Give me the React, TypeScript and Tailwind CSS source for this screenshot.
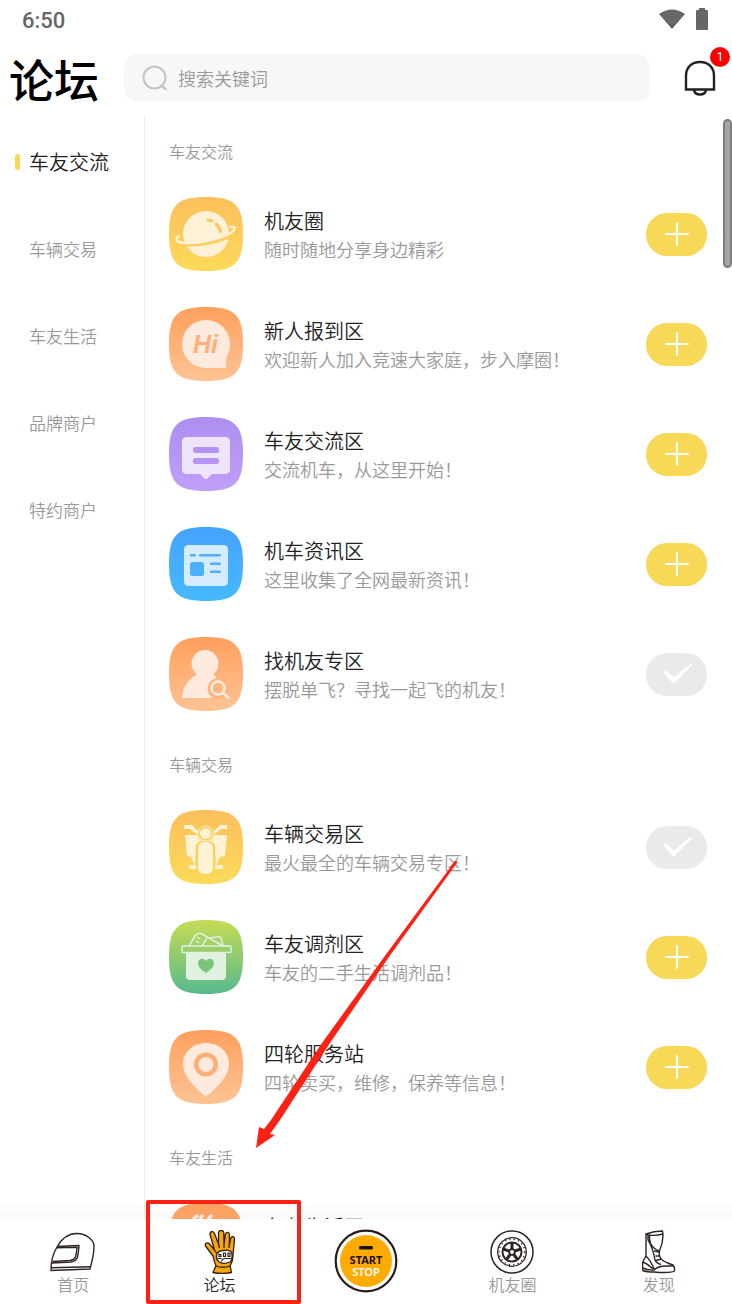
import React from "react";
import clsx from "clsx";

interface Board {
  title: string;
  desc: string;
  icon: keyof typeof boardIcons;
  joined?: boolean;
}

interface Section {
  name: string;
  boards: Board[];
}

const categories = ["车友交流", "车辆交易", "车友生活", "品牌商户", "特约商户"];

// Rounded tile with a vertical gradient that every board icon sits on
const Tile: React.FC<{
  id: string;
  from: string;
  to: string;
  children: React.ReactNode;
}> = ({ id, from, to, children }) => (
  <svg viewBox="0 0 74 74" className="size-[74px] shrink-0" aria-hidden="true">
    <defs>
      <linearGradient id={id} x1="0" y1="0" x2="0" y2="1">
        <stop offset="0" stopColor={from} />
        <stop offset="1" stopColor={to} />
      </linearGradient>
    </defs>
    <path
      d="M0 37C0 8 8 0 37 0S74 8 74 37 66 74 37 74 0 66 0 37Z"
      fill={`url(#${id})`}
    />
    {children}
  </svg>
);

const boardIcons = {
  planet: (
    <Tile id="planet" from="#fbbf5c" to="#fbdb59">
      <circle cx="37" cy="37" r="23" fill="#fff1d6" />
      <g fill="none" strokeLinecap="round">
        <path
          d="M14 47.500C30 49 49 45 60 39.500"
          stroke="#fbcf5a"
          strokeWidth="3.500"
          strokeLinecap="butt"
        />
        <path
          d="M10 39C5 43 8 45 15 46C29 47 47 42 58 38C66 34 69 29 61 30"
          stroke="#fff1d6"
          strokeWidth="2.400"
        />
        <path
          d="M39 23.300Q41 23 43 24M47 27Q51 30 51.500 34.500"
          stroke="#fbc95b"
          strokeWidth="3"
        />
      </g>
    </Tile>
  ),
  hi: (
    <Tile id="hi" from="#ffa05d" to="#fec394">
      <path
        d="M37 13A24 24 0 0 1 58 49Q57 51 57 54V61H37A24 24 0 0 1 37 13Z"
        fill="#ffeade"
      />
      <text
        x="24"
        y="46"
        fontSize="25"
        fontWeight="700"
        fontStyle="italic"
        fontFamily="Liberation Sans, sans-serif"
        fill="#ffb07a"
      >
        Hi
      </text>
    </Tile>
  ),
  chat: (
    <Tile id="chat" from="#ae8ef0" to="#bf9ff9">
      <path
        d="M18 20H56Q61 20 61 25V52Q61 57 56 57H43L38.500 61.500Q37 62.500 35.500 61.500L31 57H18Q13 57 13 52V25Q13 20 18 20Z"
        fill="#eee5fc"
      />
      <rect x="24" y="30" width="26" height="6" rx="2.500" fill="#b392f2" />
      <rect x="24" y="41" width="26" height="6" rx="2.500" fill="#b695f4" />
    </Tile>
  ),
  news: (
    <Tile id="news" from="#46a2ff" to="#45baff">
      <rect x="15" y="18" width="44" height="41" rx="4.500" fill="#d5ecff" />
      <g fill="#4bb0ff">
        <rect x="21" y="27" width="6" height="2.500" rx="1" />
        <rect x="30" y="27" width="22" height="2.500" rx="1" />
        <rect x="21" y="35" width="14" height="14" rx="2.500" />
        <rect x="41" y="35.500" width="11" height="2.500" rx="1" />
        <rect x="41" y="43.500" width="11" height="2.500" rx="1" />
      </g>
    </Tile>
  ),
  person: (
    <Tile id="person" from="#ffa05d" to="#fec394">
      <g fill="#ffeade">
        <circle cx="36" cy="26.500" r="13.500" />
        <path d="M13 60C14 49 20 42 27 38L29 35H43L45 38Q50 42 52 51L42 61H14Q13 61 13 60Z" />
      </g>
      <circle cx="49" cy="51.500" r="10.500" fill="#feb680" />
      <circle
        cx="49"
        cy="51"
        r="6.500"
        fill="none"
        stroke="#ffeade"
        strokeWidth="2.500"
      />
      <path
        d="M54 56L59 60.500"
        stroke="#ffeade"
        strokeWidth="3"
        strokeLinecap="round"
      />
    </Tile>
  ),
  moto: (
    <Tile id="moto" from="#fbbf5c" to="#fbdb59">
      <g fill="#fff3d3">
        <circle cx="36.500" cy="23.500" r="5.500" />
        <path d="M15 15H23L30 22L28 24L21 19H15Z" />
        <path d="M58 15H51L44 22L46 24L52 19H58Z" />
        <path d="M16 25H28Q30 31 35 31Q28 31 27 36L26 56L22 47L18 46Z" />
        <path d="M58 25H45Q43 31 38 31Q45 31 46 36L47 56L51 47L56 46Z" />
        <rect x="29" y="32" width="15" height="32" rx="6" />
        <rect x="20" y="55" width="7" height="4" rx="1" />
        <rect x="46" y="55" width="8" height="4" rx="1" />
      </g>
      <circle
        cx="36.500"
        cy="23.500"
        r="7.500"
        fill="none"
        stroke="#fff3d3"
        strokeWidth="1"
      />
    </Tile>
  ),
  basket: (
    <Tile id="basket" from="#c5dc55" to="#58b98d">
      <path d="M17 33H57V56Q57 60 53 60H21Q17 60 17 56Z" fill="#e0f1df" />
      <g fill="none" stroke="#e0f1df" strokeWidth="1.500" strokeLinejoin="round">
        <rect x="13" y="26" width="49" height="6.500" rx="1" />
        <path d="M20 26L26 16Q29 12 33 14L54 26M33 26L38 18M40 18L49 17Q51 16 52 18L54 26" />
        <path d="M28 17L31 19M27 21L30 23" />
      </g>
      <path
        d="M37 53C31 49 29 46 29 43C29 39 34 37 37 41C40 37 45 39 45 43C45 46 43 49 37 53Z"
        fill="#7cc47b"
      />
    </Tile>
  ),
  pin: (
    <Tile id="pin" from="#ffa05d" to="#fec394">
      <path
        d="M37 13C50 13 60 22 60 34C60 47 47 58 39 65Q37 66.500 35 65C27 58 14 47 14 34C14 22 24 13 37 13Z"
        fill="#ffeade"
      />
      <circle
        cx="37"
        cy="34.500"
        r="9.800"
        fill="none"
        stroke="#ffae77"
        strokeWidth="4.500"
      />
    </Tile>
  ),
  cup: (
    <Tile id="cup" from="#ffa05d" to="#fec394">
      <path
        d="M24 19Q25 14 28 13M33 21Q30 16 33 13M42 21Q38 16 42 13"
        fill="none"
        stroke="#ffeade"
        strokeWidth="3.500"
        strokeLinecap="round"
      />
      <path d="M18 28H54V48Q54 58 44 58H28Q18 58 18 48Z" fill="#ffeade" />
    </Tile>
  ),
};

const sections: Section[] = [
  {
    name: "车友交流",
    boards: [
      { title: "机友圈", desc: "随时随地分享身边精彩", icon: "planet" },
      {
        title: "新人报到区",
        desc: "欢迎新人加入竞速大家庭，步入摩圈！",
        icon: "hi",
      },
      { title: "车友交流区", desc: "交流机车，从这里开始！", icon: "chat" },
      { title: "机车资讯区", desc: "这里收集了全网最新资讯！", icon: "news" },
      {
        title: "找机友专区",
        desc: "摆脱单飞？寻找一起飞的机友！",
        icon: "person",
        joined: true,
      },
    ],
  },
  {
    name: "车辆交易",
    boards: [
      {
        title: "车辆交易区",
        desc: "最火最全的车辆交易专区！",
        icon: "moto",
        joined: true,
      },
      { title: "车友调剂区", desc: "车友的二手生活调剂品！", icon: "basket" },
      {
        title: "四轮服务站",
        desc: "四轮卖买，维修，保养等信息！",
        icon: "pin",
      },
    ],
  },
  {
    name: "车友生活",
    boards: [{ title: "车友生活区", desc: "分享车友的日常生活！", icon: "cup" }],
  },
];

const HelmetIcon = () => (
  <svg
    viewBox="0 0 46 44"
    className="h-11 w-[46px]"
    fill="none"
    stroke="#2e2522"
    strokeWidth="1.400"
    strokeLinejoin="round"
    aria-hidden="true"
  >
    <path d="M1 40.500C1 32 2 25 7 17C12 8 19 3.500 27 3.500C36 3.500 44 10 44 16C44 25 42 32 40 39Z" />
    <path d="M1.500 37.700L41 36.800" />
    <path d="M7 16.500L29 15.500C28 27 28 31 21 32L2 33" />
    <path d="M6 17.800L27 17.300C26 27 26 29.500 20 30.500L2.500 31.500" />
  </svg>
);

const GloveIcon = () => (
  <svg
    viewBox="0 0 32 44"
    className="h-11 w-8"
    stroke="#2e2116"
    strokeWidth="1.300"
    strokeLinejoin="round"
    aria-hidden="true"
  >
    <path
      d="M9 42.500L12 35.500C10 32 10 29 9 26L1.500 16C0.500 13 3.500 12 5.500 14L10.500 20L6 4.500C5.500 1.500 9 0.500 10.500 3.500L14.500 14L14.500 2.500C15 -0.200 19.300 -0.200 19.800 2.500L20 14L21.500 4C22.500 1.500 25.500 2 25.500 5L25.300 15L26.800 8C27.800 5.500 30.800 6.500 30.500 9.500L29 25C29 29 28 33 26 35.500L27.500 42.500Q18 44.500 9 42.500Z"
      fill="#f6a50b"
    />
    <path d="M14.500 14L15.500 18M20 14V18M25.300 15L25 18M10.500 20L12.500 23M12 36Q19 38.500 26 36" fill="none" />
    <path
      d="M12.500 25Q14 20.500 19 20.500Q27 19 28 24Q28.500 30 26 32Q19 35 14.500 31.500Q12 29 12.500 25Z"
      fill="#fff"
    />
    <path
      d="M15 23.500V26.500H17V24.500H15M19.500 23V26.500H21.500V23ZM24 23V26.500H26V23ZM14 28.500H17.500M17.500 31.500Q18 28.500 21 28.500H27"
      fill="none"
      strokeWidth="1.200"
    />
  </svg>
);

const WheelIcon = () => (
  <svg
    viewBox="0 0 44 44"
    className="size-11"
    fill="none"
    stroke="#2e2522"
    aria-hidden="true"
  >
    <circle cx="22" cy="22" r="21" strokeWidth="1.500" />
    <circle cx="22" cy="22" r="14.300" strokeWidth="1.300" />
    <circle cx="22" cy="22" r="12.800" strokeWidth="1.500" strokeDasharray="1.200 3.200" />
    <circle cx="22" cy="22" r="9.500" strokeWidth="2" />
    <circle cx="22" cy="22" r="2.800" strokeWidth="1.800" />
    <path
      d="M22 19.500V12.500M24.400 21.200L31 19M23.500 24L27.600 29.700M20.500 24L16.400 29.700M19.600 21.200L13 19"
      strokeWidth="3"
    />
  </svg>
);

const BootIcon = () => (
  <svg
    viewBox="0 0 34 44"
    className="h-11 w-[34px]"
    fill="none"
    stroke="#2e2522"
    strokeWidth="1.400"
    strokeLinejoin="round"
    aria-hidden="true"
  >
    <path d="M4 4Q12 1 20.500 1L21 5Q21 13 17.500 21Q16.500 25 19 29Q22 32 31 35Q33 37 32.500 41Q28 43.500 12 42Q4 42 1 40.500Q0 36 1 31.500L4 26Z" />
    <path d="M4 4.500Q12 6.500 21 4M7.500 5.500Q7 14 12 18Q14 20 17.500 21M6 5.500V10Q11 18 13 30Q14 33 19 34.500M12 21L17 22M13.500 26H18M14 30.500L19 29M4 26Q9 31 12 39M1 32Q6 34 11 39M1 38Q6 40.500 12 40Q16 36 24 36H32" />
  </svg>
);

const StartIcon = () => (
  <svg viewBox="0 0 64 64" className="size-16" aria-hidden="true">
    <circle cx="32" cy="32" r="30.300" fill="#fff" stroke="#2b1b19" strokeWidth="2.200" />
    <circle cx="32" cy="32" r="26" fill="#ffab04" />
    <rect x="25" y="17" width="14" height="3.500" rx="1.500" fill="#1b120c" />
    <g fontFamily="Noto Sans, sans-serif" fontSize="11" textAnchor="middle">
      <text x="32" y="35" fontWeight="700" fill="#1b120c">
        START
      </text>
      <text x="32" y="47" fontWeight="600" fill="#fff">
        STOP
      </text>
    </g>
  </svg>
);

const tabs = [
  { label: "首页", icon: <HelmetIcon /> },
  { label: "论坛", icon: <GloveIcon />, active: true },
  { label: "", icon: <StartIcon /> },
  { label: "机友圈", icon: <WheelIcon /> },
  { label: "发现", icon: <BootIcon /> },
];

const StatusBar = () => (
  <div className="flex h-10 shrink-0 items-center justify-between pr-6 pl-[22px] text-[#666]">
    <span className="font-[Roboto] text-[22px] font-medium">6:50</span>
    <div className="flex items-center gap-[11px] pb-0.5">
      <svg viewBox="0 0 26 20" className="h-5 w-[26px]" fill="currentColor" aria-hidden="true">
        <path d="M0 5Q13 -4 26 5L13 20Z" />
      </svg>
      <svg viewBox="0 0 12 22" className="h-[22px] w-3" fill="currentColor" aria-hidden="true">
        <path d="M3 0H9V2H11Q12 2 12 3V21Q12 22 11 22H1Q0 22 0 21V3Q0 2 1 2H3Z" />
      </svg>
    </div>
  </div>
);

const Header = () => (
  <header className="flex h-[76px] shrink-0 items-center pr-4 pl-[9px]">
    <h1 className="text-[45px] leading-none font-medium text-black">论坛</h1>
    <label className="ml-[25px] flex h-12 flex-1 items-center gap-2.5 rounded-[14px] bg-[#f7f7f7] pl-[18px]">
      <svg
        viewBox="0 0 26 26"
        className="size-[26px] shrink-0"
        fill="none"
        stroke="#c4c4c4"
        strokeWidth="2"
        strokeLinecap="round"
        aria-hidden="true"
      >
        <circle cx="12.500" cy="12.500" r="11" />
        <path d="M19.500 20.500L23.500 24" strokeWidth="2.500" />
      </svg>
      <input
        type="search"
        aria-label="搜索"
        placeholder="搜索关键词"
        className="min-w-0 flex-1 bg-transparent text-lg outline-none placeholder:text-[#999]"
      />
    </label>
    <button type="button" aria-label="消息" className="relative ml-[34px]">
      <svg
        viewBox="0 0 32 36"
        className="h-9 w-8"
        fill="none"
        stroke="#222"
        strokeWidth="2.400"
        aria-hidden="true"
      >
        <path d="M2 29.500V16C2 7 8 2 16 2S30 7 30 16V29.500Z" />
        <path d="M10 30C11 36 21 36 22 30" />
      </svg>
      <span className="absolute -top-[13px] -right-[14px] flex size-5 items-center justify-center rounded-full bg-[#ff0000] font-[Roboto] text-xs font-normal text-white">
        1
      </span>
    </button>
  </header>
);

const JoinButton: React.FC<{ joined?: boolean }> = ({ joined }) => (
  <button
    type="button"
    aria-label={joined ? "已加入" : "加入"}
    className={clsx(
      "flex h-[43px] w-[61px] shrink-0 items-center justify-center rounded-[21px]",
      joined ? "bg-[#eaeaea]" : "bg-[#f7d857]"
    )}
  >
    {joined ? (
      <svg viewBox="0 0 30 20" className="h-5 w-[30px]" fill="#fff" aria-hidden="true">
        <path d="M2 9Q1.500 6 4.500 7L12 13.500L28.500 0Q30.500 -0.500 29.500 1.500L11.500 20Z" />
      </svg>
    ) : (
      <svg
        viewBox="0 0 24 24"
        className="size-6"
        stroke="#fff"
        strokeWidth="2"
        strokeLinecap="round"
        aria-hidden="true"
      >
        <path d="M1 12H23M12 1V23" />
      </svg>
    )}
  </button>
);

const BoardRow: React.FC<{ board: Board }> = ({ board }) => (
  <li className="flex h-[110px] items-center">
    {boardIcons[board.icon]}
    <div className="ml-[21px] min-w-0 flex-1">
      <h3 className="text-xl leading-[30px] text-[#222]">{board.title}</h3>
      <p className="truncate text-lg leading-[26px] text-[#999]">{board.desc}</p>
    </div>
    <JoinButton joined={board.joined} />
  </li>
);

const Sidebar = () => (
  <aside className="w-[145px] shrink-0 border-r border-[#ececec] pt-0.5">
    {categories.map((name, i) => (
      <button
        key={name}
        type="button"
        className="flex h-[87px] w-full items-center gap-[9px] pl-[15px]"
      >
        <span
          className={clsx("h-4 w-[5px] rounded-full", i === 0 && "bg-[#f7d857]")}
        />
        <span className={i === 0 ? "text-xl text-[#222]" : "text-[17px] text-[#999]"}>
          {name}
        </span>
      </button>
    ))}
  </aside>
);

const TabBar = () => (
  <nav className="relative flex h-[85px] shrink-0 bg-white">
    <div className="pointer-events-none absolute inset-x-0 -top-5 h-5 bg-linear-to-b from-transparent to-black/2" />
    {tabs.map((tab, i) => (
      <a
        key={i}
        href="#"
        aria-label={tab.label || "START STOP"}
        className={clsx(
          "relative flex flex-1 flex-col items-center",
          tab.active ? "text-[#222]" : "text-[#999]",
          tab.label ? "pt-[11px]" : "pt-[10px]"
        )}
      >
        {tab.icon}
        {tab.label && <span className="text-base leading-[21px]">{tab.label}</span>}
        {/* Highlight frame and the arrow that points at it */}
        {tab.active && (
          <>
            <span className="pointer-events-none absolute -top-[19px] bottom-0 left-0 w-[155px] rounded-[2px] border-4 border-[#ff2014]" />
            <svg
              viewBox="0 0 204 288"
              className="pointer-events-none absolute bottom-[156px] left-[108px] h-[288px] w-[204px]"
              fill="#ff2014"
              aria-hidden="true"
            >
              <path d="M202 1Q204 1 203 3L137 94L76 183L26 260L16 274L21 275L2 288L5 267L10 269L17 260L68 183L133 93L201 1Z" />
            </svg>
          </>
        )}
      </a>
    ))}
  </nav>
);

export default function App() {
  return (
    <div className="flex h-screen flex-col overflow-hidden bg-white font-['Noto_Sans_CJK_SC',sans-serif] font-[350]">
      <StatusBar />
      <Header />
      <div className="relative flex min-h-0 flex-1">
        <Sidebar />
        <main className="min-w-0 flex-1 overflow-hidden pr-[25px] pl-6">
          {sections.map((section) => (
            <section key={section.name}>
              <h2 className="flex h-[63px] items-center pt-1.5 text-base text-[#999]">
                {section.name}
              </h2>
              <ul>
                {section.boards.map((board) => (
                  <BoardRow key={board.title} board={board} />
                ))}
              </ul>
            </section>
          ))}
        </main>
        <div className="absolute top-[3px] right-0 h-[149px] w-[9px] rounded-full border-2 border-[#7d7d7d] bg-[#a5a5a5]" />
      </div>
      <TabBar />
    </div>
  );
}
